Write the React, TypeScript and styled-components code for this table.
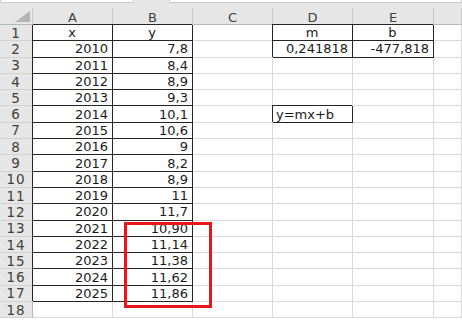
import React from 'react'
import styled, { createGlobalStyle, css } from 'styled-components'

const ROW_H = 16.3

const GlobalStyle = createGlobalStyle`
  html, body {
    margin: 0;
    padding: 0;
    background: #ffffff;
    overflow: hidden;
  }
  body {
    font-family: "DejaVu Sans", "Liberation Sans", sans-serif;
  }
`

const Sheet = styled.div`
  width: 462px;
  height: 323px;
  overflow: hidden;
  background: #ffffff;
`

const TopStrip = styled.div`
  display: flex;
  gap: 35px;
  height: 8px;
  background: #e6e6e6;
`

const InputBox = styled.div<{ $width?: number }>`
  height: 2px;
  background: #ffffff;
  border: 1px solid #c8c8c8;
  border-top: none;
  border-radius: 0 0 2px 2px;
  ${(p) => (p.$width ? `width: ${p.$width}px;` : 'flex: 1;')}
`

const Grid = styled.div`
  position: relative;
  display: grid;
  grid-template-columns: 33px 80px 80px 80px 80px 81px 1fr;
  grid-template-rows: 17px repeat(18, ${ROW_H}px);
  color: #1a1a1a;
  font-size: 13px;
`

const Corner = styled.div`
  position: relative;
  background: #e6e6e6;
  border-right: 1px solid #c6c6c6;
  border-bottom: 1px solid #b8b8b8;
  &::after {
    content: '';
    position: absolute;
    right: 2px;
    bottom: 2px;
    width: 0;
    height: 0;
    border-style: solid;
    border-width: 0 0 11px 15px;
    border-color: transparent transparent #b4b4b4 transparent;
  }
`

const ColHead = styled.div`
  display: flex;
  align-items: center;
  justify-content: center;
  background: #e6e6e6;
  border-right: 1px solid #c6c6c6;
  border-bottom: 1px solid #b8b8b8;
  color: #404040;
  font-size: 13px;
  padding-top: 2px;
`

const RowHead = styled.div`
  display: flex;
  align-items: center;
  justify-content: center;
  background: #e6e6e6;
  border-right: 1px solid #b8b8b8;
  border-bottom: 1px solid #d2d2d2;
  color: #404040;
  font-size: 13.5px;
  letter-spacing: 0.8px;
`

const Cell = styled.div<{ $align?: 'left' | 'center' | 'right'; $boxed?: boolean }>`
  display: flex;
  align-items: center;
  justify-content: ${(p) =>
    p.$align === 'right' ? 'flex-end' : p.$align === 'center' ? 'center' : 'flex-start'};
  padding: 0 4px 0 3px;
  border-right: 1px solid #d9d9d9;
  border-bottom: 1px solid #d9d9d9;
  white-space: nowrap;
  overflow: visible;
  line-height: 1;
  ${(p) =>
    p.$boxed &&
    css`
      border-right-color: #262626;
      border-bottom-color: #262626;
      box-shadow: -1px -1px 0 0 #262626;
    `}
`

// red marker drawn over B13:B17, overflowing into column C
const Highlight = styled.div`
  position: absolute;
  grid-column: 3 / 4;
  grid-row: 14 / 19;
  top: 1px;
  left: 11px;
  right: -19px;
  bottom: -6px;
  border: 3px solid #e8161b;
  pointer-events: none;
  z-index: 2;
`

type CellDef = { text: string; align?: 'left' | 'center' | 'right'; boxed?: boolean }

const years = ['2010', '2011', '2012', '2013', '2014', '2015', '2016', '2017', '2018', '2019', '2020', '2021', '2022', '2023', '2024', '2025']
const yVals = ['7,8', '8,4', '8,9', '9,3', '10,1', '10,6', '9', '8,2', '8,9', '11', '11,7', '10,90', '11,14', '11,38', '11,62', '11,86']

function buildRow(r: number): CellDef[] {
  const empty: CellDef = { text: '' }
  const row: CellDef[] = [empty, empty, empty, empty, empty, empty]
  if (r === 1) {
    row[0] = { text: 'x', align: 'center', boxed: true }
    row[1] = { text: 'y', align: 'center', boxed: true }
    row[3] = { text: 'm', align: 'center', boxed: true }
    row[4] = { text: 'b', align: 'center', boxed: true }
  } else if (r <= 17) {
    row[0] = { text: years[r - 2], align: 'right', boxed: true }
    row[1] = { text: yVals[r - 2], align: 'right', boxed: true }
  }
  if (r === 2) {
    row[3] = { text: '0,241818', align: 'right', boxed: true }
    row[4] = { text: '-477,818', align: 'right', boxed: true }
  }
  if (r === 6) {
    row[3] = { text: 'y=mx+b', align: 'left', boxed: true }
  }
  return row
}

const columns = ['A', 'B', 'C', 'D', 'E', '']
const rows = Array.from({ length: 18 }, (_, i) => i + 1)

export default function App() {
  return (
    <>
      <GlobalStyle />
      <Sheet>
        <TopStrip>
          <InputBox $width={132} />
          <InputBox />
        </TopStrip>
        <Grid>
          <Corner />
          {columns.map((c, i) => (
            <ColHead key={i}>{c}</ColHead>
          ))}
          {rows.map((r) => (
            <React.Fragment key={r}>
              <RowHead>{r}</RowHead>
              {buildRow(r).map((cell, i) => (
                <Cell key={i} $align={cell.align} $boxed={cell.boxed}>
                  {cell.text}
                </Cell>
              ))}
            </React.Fragment>
          ))}
          <Highlight />
        </Grid>
      </Sheet>
    </>
  )
}
